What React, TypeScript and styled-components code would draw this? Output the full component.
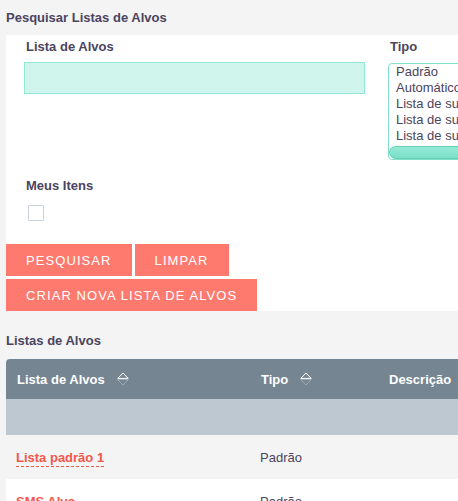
import React from "react";
import styled, { createGlobalStyle } from "styled-components";

const GlobalStyle = createGlobalStyle`
  body {
    margin: 0;
    background: #f4f4f4;
    font-family: "Liberation Sans", Arial, sans-serif;
    overflow: hidden;
  }
`;

const Page = styled.div`
  width: 820px;
  padding: 10px 0 0 6px;
`;

const SectionTitle = styled.h2<{ $top?: number }>`
  margin: ${(p) => p.$top ?? 0}px 0 ${(p) => (p.$top ? 10 : 9)}px;
  font-size: 13px;
  line-height: 16px;
  font-weight: 700;
  color: #4b4460;
`;

const Panel = styled.div`
  background: #fff;
  padding-top: 4px;
`;

const FieldRow = styled.div`
  display: flex;
  gap: 23px;
  padding: 0 18px;
`;

const Field = styled.div`
  display: flex;
  flex-direction: column;
`;

const Label = styled.label`
  margin: 0 0 7px 2px;
  font-size: 13px;
  line-height: 16px;
  font-weight: 700;
  color: #4b4460;
`;

const TextInput = styled.input`
  box-sizing: border-box;
  width: 341px;
  height: 32px;
  background: #cff5ec;
  border: 1px solid #8fe8d3;
  outline: none;
`;

const ListBox = styled.div`
  position: relative;
  box-sizing: border-box;
  width: 140px;
  height: 97px;
  margin-top: 1px;
  border: 1px solid #80e0c9;
  border-radius: 4px;
  background: #fff;
  overflow: hidden;
`;

const ScrollThumb = styled.div`
  position: absolute;
  left: 0;
  bottom: 0;
  box-sizing: border-box;
  width: 112px;
  height: 13px;
  border: 1px solid #62cfb4;
  border-radius: 7px;
  background: linear-gradient(#95ead6, #7adfc6);
`;

const Option = styled.div`
  padding: 0 7px;
  white-space: nowrap;
  font-size: 13px;
  line-height: 16px;
  color: #4b4460;
`;

const CheckGroup = styled.div`
  display: flex;
  flex-direction: column;
  align-items: flex-start;
  padding: 18px 18px 0;
`;

const CheckLabel = styled(Label)`
  margin-bottom: 11px;
`;

const CheckBox = styled.span`
  box-sizing: border-box;
  width: 16px;
  height: 16px;
  margin-left: 4px;
  border: 1px solid #c9d3de;
  border-radius: 1px;
  background: #fff;
`;

const Actions = styled.div`
  display: flex;
  flex-direction: column;
  align-items: flex-start;
  gap: 3px;
  margin-top: 23px;
`;

const ActionRow = styled.div`
  display: flex;
  gap: 3px;
`;

const Button = styled.button`
  height: 32px;
  padding: 0 20px;
  border: none;
  background: #ff7a6e;
  color: #fff;
  font-family: "Liberation Sans", Arial, sans-serif;
  font-size: 13px;
  letter-spacing: 1.08px;
  text-transform: uppercase;
  cursor: pointer;
`;

const Table = styled.table`
  width: 760px;
  table-layout: fixed;
  border-collapse: collapse;
  font-size: 13px;
`;

const HeadCell = styled.th`
  height: 40px;
  padding: 0 11px;
  background: #758592;
  color: #fff;
  font-weight: 700;
  text-align: left;

  &:first-child {
    border-top-left-radius: 4px;
  }
`;

const HeadInner = styled.span`
  display: inline-flex;
  align-items: center;
  gap: 12px;
`;

const FilterRow = styled.tr`
  height: 36px;
  background: #bdc8d0;
`;

const BodyRow = styled.tr<{ $alt: boolean }>`
  height: 44px;
  background: ${(p) => (p.$alt ? "#fff" : "#f4f4f4")};
`;

const Cell = styled.td`
  padding: 0 10px;
  color: #4b4460;
  vertical-align: middle;
`;

const NameLink = styled.a`
  color: #f2574b;
  font-weight: 700;
  text-decoration: none;
  border-bottom: 1px dashed #f2574b;
  padding-bottom: 1px;
`;

const SortIcon = () => (
  <svg width="12" height="14" viewBox="0 0 12 14">
    <path d="M0.8 6.4 L6 1 L11.2 6.4 Z" fill="none" stroke="#fff" strokeWidth="1" />
    <path d="M0.8 7.6 L6 13 L11.2 7.6 Z" fill="none" stroke="rgba(255,255,255,0.3)" strokeWidth="1" />
  </svg>
);

const tipos = [
  "Padrão",
  "Automático",
  "Lista de subscrição dinâmica",
  "Lista de supressão",
  "Lista de suspensos",
  "Todos",
];

const listas = [
  { nome: "Lista padrão 1", tipo: "Padrão" },
  { nome: "SMS Alvo", tipo: "Padrão" },
];

export default function App() {
  return (
    <>
      <GlobalStyle />
      <Page>
        <SectionTitle>Pesquisar Listas de Alvos</SectionTitle>
        <Panel>
          <FieldRow>
            <Field>
              <Label>Lista de Alvos</Label>
              <TextInput type="text" />
            </Field>
            <Field>
              <Label>Tipo</Label>
              <ListBox>
                {tipos.map((t) => (
                  <Option key={t}>{t}</Option>
                ))}
                <ScrollThumb />
              </ListBox>
            </Field>
          </FieldRow>
          <CheckGroup>
            <CheckLabel>Meus Itens</CheckLabel>
            <CheckBox />
          </CheckGroup>
          <Actions>
            <ActionRow>
              <Button>Pesquisar</Button>
              <Button>Limpar</Button>
            </ActionRow>
            <Button>Criar nova lista de alvos</Button>
          </Actions>
        </Panel>

        <SectionTitle $top={22}>Listas de Alvos</SectionTitle>
        <Table>
          <colgroup>
            <col style={{ width: 244 }} />
            <col style={{ width: 128 }} />
            <col />
          </colgroup>
          <thead>
            <tr>
              <HeadCell>
                <HeadInner>
                  Lista de Alvos <SortIcon />
                </HeadInner>
              </HeadCell>
              <HeadCell>
                <HeadInner>
                  Tipo <SortIcon />
                </HeadInner>
              </HeadCell>
              <HeadCell>
                <HeadInner>
                  Descrição <SortIcon />
                </HeadInner>
              </HeadCell>
            </tr>
          </thead>
          <tbody>
            <FilterRow>
              <td />
              <td />
              <td />
            </FilterRow>
            {listas.map((l, i) => (
              <BodyRow key={l.nome} $alt={i % 2 === 1}>
                <Cell>
                  <NameLink href="#">{l.nome}</NameLink>
                </Cell>
                <Cell>{l.tipo}</Cell>
                <Cell />
              </BodyRow>
            ))}
          </tbody>
        </Table>
      </Page>
    </>
  );
}
